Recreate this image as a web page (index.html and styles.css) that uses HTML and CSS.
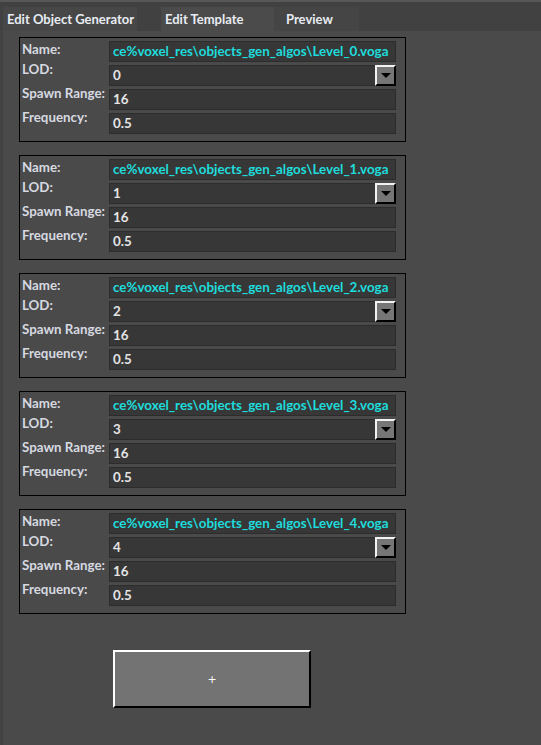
FILE: index.html
```html
<!DOCTYPE html>
<html lang="en">
<head>
    <meta charset="UTF-8">
    <meta name="viewport" content="width=device-width, initial-scale=1.0">
    <title>Edit Object Generator</title>
    <link rel="stylesheet" href="styles.css">
</head>
<body>
    <div class="topline"></div>
    <nav class="tabbar">
        <div class="tab tab-active">Edit Object Generator</div>
        <div class="tab tab-template">Edit Template</div>
        <div class="tab tab-preview">Preview</div>
    </nav>

    <main class="main">
        <div class="lods">
            <div class="panel">
                <div class="label">Name:</div>
                <div class="field field-name">ce%voxel_res\objects_gen_algos\Level_0.voga</div>
                <div class="label">LOD:</div>
                <div class="field field-select">0<span class="drop"></span></div>
                <div class="label">Spawn Range:</div>
                <div class="field">16</div>
                <div class="label">Frequency:</div>
                <div class="field">0.5</div>
            </div>

            <div class="panel">
                <div class="label">Name:</div>
                <div class="field field-name">ce%voxel_res\objects_gen_algos\Level_1.voga</div>
                <div class="label">LOD:</div>
                <div class="field field-select">1<span class="drop"></span></div>
                <div class="label">Spawn Range:</div>
                <div class="field">16</div>
                <div class="label">Frequency:</div>
                <div class="field">0.5</div>
            </div>

            <div class="panel">
                <div class="label">Name:</div>
                <div class="field field-name">ce%voxel_res\objects_gen_algos\Level_2.voga</div>
                <div class="label">LOD:</div>
                <div class="field field-select">2<span class="drop"></span></div>
                <div class="label">Spawn Range:</div>
                <div class="field">16</div>
                <div class="label">Frequency:</div>
                <div class="field">0.5</div>
            </div>

            <div class="panel">
                <div class="label">Name:</div>
                <div class="field field-name">ce%voxel_res\objects_gen_algos\Level_3.voga</div>
                <div class="label">LOD:</div>
                <div class="field field-select">3<span class="drop"></span></div>
                <div class="label">Spawn Range:</div>
                <div class="field">16</div>
                <div class="label">Frequency:</div>
                <div class="field">0.5</div>
            </div>

            <div class="panel">
                <div class="label">Name:</div>
                <div class="field field-name">ce%voxel_res\objects_gen_algos\Level_4.voga</div>
                <div class="label">LOD:</div>
                <div class="field field-select">4<span class="drop"></span></div>
                <div class="label">Spawn Range:</div>
                <div class="field">16</div>
                <div class="label">Frequency:</div>
                <div class="field">0.5</div>
            </div>
        </div>

        <button class="add-btn">+</button>
    </main>
</body>
</html>
```

FILE: styles.css
```css
* {
    box-sizing: border-box;
    margin: 0;
    padding: 0;
}

html, body {
    height: 100%;
}

body {
    font-family: Lato, 'Open Sans', sans-serif;
    font-weight: 700;
    font-size: 13px;
    background: #434343;
    color: #d6d9e0;
    display: flex;
    flex-direction: column;
}

.topline {
    height: 2px;
    background: #575757;
}

/* tabs */
.tabbar {
    height: 29px;
    background: #414141;
    display: flex;
    align-items: flex-end;
    padding-left: 3px;
}

.tab {
    height: 24px;
    line-height: 24px;
    color: #e8ecf2;
    white-space: nowrap;
}

.tab-active {
    width: 134px;
    padding-left: 4px;
    background: #474747;
}

.tab-template {
    width: 113px;
    margin-left: 24px;
    padding-left: 4px;
    background: #4b4b4b;
}

.tab-preview {
    width: 85px;
    padding-left: 12px;
    background: #454545;
}

/* content */
.main {
    flex: 1;
    margin-left: 3px;
    background: #4a4a4a;
    padding: 6px 0 0 16px;
}

.lods {
    display: flex;
    flex-direction: column;
    gap: 13px;
}

.panel {
    width: 387px;
    border: 1px solid #000;
    padding: 3px 9px 7px 0;
    display: grid;
    grid-template-columns: 89px 287px;
    row-gap: 3px;
    align-items: start;
}

.label {
    padding-left: 2px;
    font-size: 13.3px;
    line-height: 16px;
    white-space: nowrap;
}

.label + .field + .label {
    margin-top: -4px;
}

.field {
    position: relative;
    height: 21px;
    line-height: 19px;
    padding: 0 3px;
    font-size: 13.4px;
    background: #373737;
    border: 1px solid #2c2c2c;
    color: #e4e4e4;
    white-space: nowrap;
    overflow: hidden;
}

.field-name {
    color: #1edcdc;
}

.field-select {
    overflow: visible;
}

.drop {
    position: absolute;
    top: -1px;
    right: -1px;
    width: 21px;
    height: 21px;
    background: #767676;
    border: 2px solid;
    border-color: #f2f2f2 #000 #000 #f2f2f2;
    display: flex;
    align-items: center;
    justify-content: center;
}

.drop::after {
    content: '';
    border-left: 5px solid transparent;
    border-right: 5px solid transparent;
    border-top: 5px solid #000;
}

.add-btn {
    display: block;
    width: 198px;
    height: 58px;
    margin: 36px 0 0 94px;
    background: #737373;
    border: 2px solid;
    border-color: #fff #000 #000 #fff;
    color: #fff;
    font-family: 'DejaVu Sans', sans-serif;
    font-size: 11px;
    font-weight: 400;
}
```
